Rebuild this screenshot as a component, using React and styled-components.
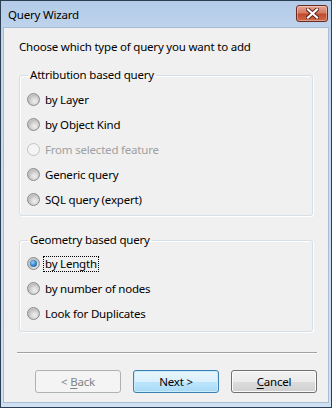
import React, { useState } from 'react';
import styled, { createGlobalStyle, css } from 'styled-components';

const GlobalStyle = createGlobalStyle`
    html, body {
        margin: 0;
        padding: 0;
        background: #ffffff;
    }
    body {
        font-family: "Noto Sans", "Open Sans", sans-serif;
        font-size: 11.5px;
        letter-spacing: -0.2px;
        color: #000;
    }
`;

const attributionOptions = [
    { id: 'layer', label: 'by Layer' },
    { id: 'kind', label: 'by Object Kind' },
    { id: 'selected', label: 'From selected feature', disabled: true },
    { id: 'generic', label: 'Generic query' },
    { id: 'sql', label: 'SQL query (expert)' },
];

const geometryOptions = [
    { id: 'length', label: 'by Length' },
    { id: 'nodes', label: 'by number of nodes' },
    { id: 'duplicates', label: 'Look for Duplicates' },
];

const CloseGlyph = () => (
    <svg width="13" height="11" viewBox="0 0 13 11">
        <path d="M2 1.5 L11 9.5 M11 1.5 L2 9.5" stroke="#5a2016" strokeWidth="4" strokeLinecap="square" />
        <path d="M2 1.5 L11 9.5 M11 1.5 L2 9.5" stroke="#ffffff" strokeWidth="2.2" strokeLinecap="square" />
    </svg>
);

const App = () => {
    const [choice, setChoice] = useState('length');

    const renderOption = (opt) => (
        <Option key={opt.id} $disabled={opt.disabled} onClick={() => !opt.disabled && setChoice(opt.id)}>
            <RadioCircle $checked={choice === opt.id} $disabled={opt.disabled} />
            <OptionText $focused={choice === opt.id}>{opt.label}</OptionText>
        </Option>
    );

    return (
        <>
            <GlobalStyle />
            <Window>
                <TitleBar>
                    <Title>Query Wizard</Title>
                    <CloseButton type="button"><CloseGlyph /></CloseButton>
                </TitleBar>
                <Content>
                    <Heading>Choose which type of query you want to add</Heading>
                    <GroupBox>
                        <Legend>Attribution based query</Legend>
                        {attributionOptions.map(renderOption)}
                    </GroupBox>
                    <GroupBox $second>
                        <Legend>Geometry based query</Legend>
                        {geometryOptions.map(renderOption)}
                    </GroupBox>
                    <Separator />
                    <ButtonRow>
                        <WizardButton disabled>&lt; <u>B</u>ack</WizardButton>
                        <WizardButton $default>Next &gt;</WizardButton>
                        <WizardButton><u>C</u>ancel</WizardButton>
                    </ButtonRow>
                </Content>
            </Window>
        </>
    );
};

const Window = styled.div`
    width: 332px;
    height: 408px;
    box-sizing: border-box;
    display: flex;
    flex-direction: column;
    border: 1px solid #2c3f52;
    background: linear-gradient(to bottom, #b3cbe8 0, #c4d8ee 40px, #cfe0f2 100%);
`;

const TitleBar = styled.div`
    height: 26px;
    display: flex;
    align-items: center;
    justify-content: space-between;
    padding: 0 3px 0 7px;
`;

const Title = styled.span`
    font-size: 11.5px;
    color: #000;
    margin-top: 1px;
`;

const CloseButton = styled.button`
    width: 32px;
    height: 17px;
    margin-top: -2px;
    padding: 0;
    display: flex;
    align-items: center;
    justify-content: center;
    border: 1px solid #6b2a1f;
    border-radius: 3px;
    background: linear-gradient(to bottom, #e6a493 0, #d47b63 45%, #c24a2f 55%, #cf6a48 100%);
    box-shadow: inset 0 0 0 1px rgba(255, 255, 255, 0.35);
`;

const Content = styled.div`
    flex: 1;
    margin: 0 2px 4px 2px;
    border: 1px solid #a9bdd4;
    background: #f0f0f0;
    padding: 11px 11px 0 15px;
    display: flex;
    flex-direction: column;
`;

const Heading = styled.div`
    line-height: 16px;
    margin-bottom: 12px;
`;

const GroupBox = styled.fieldset`
    margin: ${(p) => (p.$second ? '16px' : '0')} 4px 0 0;
    padding: ${(p) => (p.$second ? '3px 0 5px 7px' : '4px 0 3px 7px')};
    border: 1px solid #d5dfe5;
    border-radius: 3px;
    box-shadow: inset 1px 1px 0 #ffffff, 1px 1px 0 #ffffff;
`;

const Legend = styled.legend`
    padding: 0 2px;
    margin-left: 1px;
    line-height: 16px;
`;

const Option = styled.label`
    height: 25px;
    display: flex;
    align-items: center;
    gap: 4px;
    color: ${(p) => (p.$disabled ? '#a0a0a0' : '#000')};
`;

const RadioCircle = styled.span`
    width: 11px;
    height: 11px;
    border-radius: 50%;
    border: 1px solid ${(p) => (p.$disabled ? '#c4c4c4' : '#8a8b8b')};
    background: ${(p) => (p.$disabled
        ? '#f4f4f4'
        : 'radial-gradient(circle at 60% 65%, #f0f0f0 0, #d8d8d8 35%, #bdbdbd 62%, #f2f2f2 100%)')};
    position: relative;
    flex-shrink: 0;

    ${(p) => p.$checked && css`
        &::after {
            content: '';
            position: absolute;
            left: 2px;
            top: 2px;
            width: 7px;
            height: 7px;
            border-radius: 50%;
            background: radial-gradient(circle at 40% 35%, #9fd0f6 0, #3c8ad0 45%, #1a4f86 100%);
        }
    `}
`;

const OptionText = styled.span`
    padding: 0 1px;
    line-height: 14px;
    outline: ${(p) => (p.$focused ? '1px dotted #000' : 'none')};
`;

const Separator = styled.div`
    margin: 20px 0 16px -2px;
    height: 0;
    border-top: 1px solid #a0a0a0;
    border-bottom: 1px solid #ffffff;
`;

const ButtonRow = styled.div`
    display: flex;
    justify-content: flex-end;
    gap: 12px;
`;

const WizardButton = styled.button`
    width: 86px;
    height: 23px;
    padding: 0;
    font-family: inherit;
    font-size: 11.5px;
    letter-spacing: -0.2px;
    color: #000;
    border: 1px solid #707070;
    border-radius: 3px;
    background: linear-gradient(to bottom, #f2f2f2 0, #ebebeb 50%, #dddddd 50%, #cfcfcf 100%);
    box-shadow: inset 0 0 0 1px #fbfbfb;

    u {
        text-decoration-thickness: 1px;
        text-underline-offset: 2px;
    }

    ${(p) => p.$default && css`
        border-color: #3c7fb1;
        background: linear-gradient(to bottom, #eaf6fd 0, #d9f0fc 50%, #bee6fd 50%, #a7d9f5 100%);
        box-shadow: inset 0 0 0 1px #c8ecfc;
    `}

    &:disabled {
        color: #838383;
        border-color: #adb2b5;
        background: #f4f4f4;
        box-shadow: none;
    }
`;

export default App;
